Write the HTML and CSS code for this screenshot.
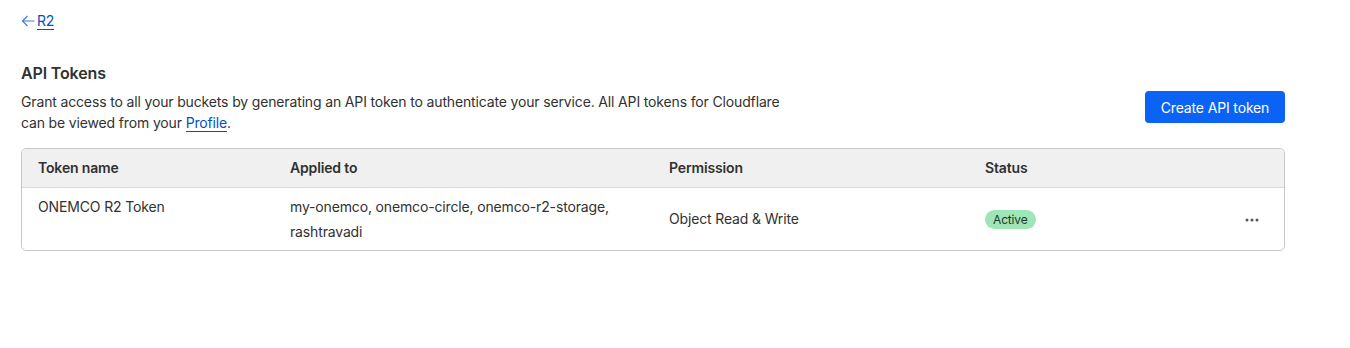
FILE: index.html
```html
<!DOCTYPE html>
<html>
<head>
<meta charset="utf-8">
<link rel="stylesheet" href="styles.css">
</head>
<body>
<div class="page">
  <a class="back" href="#"><svg class="arrow" width="14" height="14" viewBox="0 0 14 14"><path d="M13.5 7H1.5M6.5 2L1.5 7l5 5" fill="none" stroke="#3d7fd9" stroke-width="1.2"/></svg><span class="back-text">R2</span></a>
  <h2 class="title">API Tokens</h2>
  <div class="intro">
    <p class="desc">Grant access to all your buckets by generating an API token to authenticate your service. All API tokens for Cloudflare can be viewed from your <a class="link" href="#">Profile</a>.</p>
    <button class="btn">Create API token</button>
  </div>
  <div class="table-wrap">
    <table class="table">
      <thead>
        <tr>
          <th class="c1">Token name</th>
          <th class="c2">Applied to</th>
          <th class="c3">Permission</th>
          <th class="c4">Status</th>
          <th class="c5"></th>
        </tr>
      </thead>
      <tbody>
        <tr>
          <td class="top">ONEMCO R2 Token</td>
          <td>my-onemco, onemco-circle, onemco-r2-storage, rashtravadi</td>
          <td>Object Read &amp; Write</td>
          <td><span class="badge">Active</span></td>
          <td class="actions"><svg width="14" height="4" viewBox="0 0 14 4"><circle cx="2" cy="2" r="1.5" fill="#555"/><circle cx="7" cy="2" r="1.5" fill="#555"/><circle cx="12" cy="2" r="1.5" fill="#555"/></svg></td>
        </tr>
      </tbody>
    </table>
  </div>
</div>
</body>
</html>
```
FILE: styles.css
```css
* { box-sizing: border-box; }
body {
  margin: 0;
  background: #fff;
  font-family: Inter, "Noto Sans", sans-serif;
  color: #313131;
  letter-spacing: -0.15px;
}
.page {
  width: 1264px;
  margin-left: 21px;
  padding-top: 12px;
}
.back {
  display: inline-flex;
  align-items: center;
  gap: 2px;
  color: #0051c3;
  text-decoration: none;
  font-size: 14px;
  line-height: 18px;
}
.back-text {
  border-bottom: 1px solid #0051c3;
  line-height: 16px;
}
.arrow { display: block; }
.title {
  margin: 31px 0 0;
  font-size: 16px;
  font-weight: 600;
  line-height: 20px;
  color: #313131;
}
.intro {
  display: flex;
  justify-content: space-between;
  align-items: flex-start;
  margin-top: 8px;
}
.desc {
  margin: 0;
  max-width: 780px;
  font-size: 14px;
  line-height: 21px;
  color: #313131;
}
.link {
  color: #0051c3;
  text-decoration: none;
  border-bottom: 1px solid #0051c3;
}
.btn {
  margin-top: 0;
  height: 32px;
  width: 140px;
  border: none;
  border-radius: 4px;
  background: #0b63f5;
  color: #fff;
  font-family: inherit;
  font-size: 14px;
  letter-spacing: -0.15px;
}
.table-wrap {
  margin-top: 15px;
  border: 1px solid #c8c8c8;
  border-radius: 5px;
  overflow: hidden;
}
.table {
  width: 100%;
  border-collapse: collapse;
  font-size: 14px;
  table-layout: fixed;
}
thead th {
  background: #f0f0f0;
  text-align: left;
  font-weight: 600;
  height: 38px;
  padding: 0 16px;
  border-bottom: 1px solid #d9d9d9;
}
.c1 { width: 252px; }
.c2 { width: 379px; }
.c3 { width: 316px; }
.c4 { width: 220px; }
tbody td {
  padding: 6px 16px;
  line-height: 25px;
  vertical-align: middle;
}
tbody td.top { vertical-align: top; }
.badge {
  display: inline-block;
  background: #9ee5b7;
  color: #1c3a28;
  font-size: 12px;
  line-height: 19px;
  padding: 0 8px;
  border-radius: 10px;
}
.actions { text-align: left; padding-left: 56px; }
.actions svg { vertical-align: middle; }
```
